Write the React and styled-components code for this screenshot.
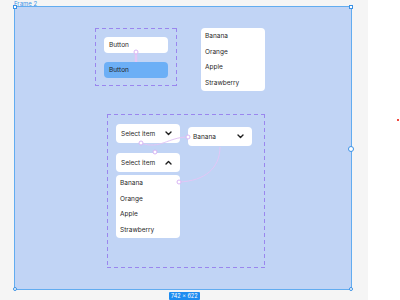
import React from 'react';
import styled, { createGlobalStyle } from 'styled-components';

const GlobalStyle = createGlobalStyle`
  html, body {
    margin: 0;
    padding: 0;
    width: 400px;
    height: 300px;
    overflow: hidden;
    font-family: Inter, "Noto Sans", sans-serif;
  }
`;

const Workspace = styled.div`
  display: flex;
  width: 400px;
  height: 300px;
`;

const Canvas = styled.div`
  width: 368px;
  height: 300px;
  background: #f5f5f5;
  padding: 0 0 0 14px;
  box-sizing: border-box;
  display: flex;
  flex-direction: column;
  align-items: flex-start;
`;

const Sidebar = styled.div`
  flex: 1;
  background: #ffffff;
  position: relative;

  &::after {
    content: '';
    position: absolute;
    left: 29px;
    top: 119px;
    width: 2px;
    height: 2px;
    background: #f0483e;
  }
`;

const FrameLabel = styled.div`
  height: 6px;
  font-size: 6px;
  line-height: 7px;
  color: #3b92e6;
  overflow: visible;
`;

const Frame = styled.div`
  position: relative;
  width: 338px;
  height: 284px;
  box-sizing: border-box;
  background: #c1d4f5;
  border: 1px solid #62acf0;
`;

const Handle = styled.span`
  position: absolute;
  width: 4px;
  height: 4px;
  box-sizing: border-box;
  background: #ffffff;
  border: 1px solid #3b92e6;
  border-radius: ${(p) => (p.$square ? '0' : '50%')};
  transform: translate(-50%, -50%);
`;

const MidHandle = styled(Handle)`
  width: 6px;
  height: 6px;
`;

const Badge = styled.div`
  align-self: flex-start;
  margin: 2px 0 0 155px;
  padding: 0 2px;
  height: 8px;
  line-height: 8px;
  font-size: 5.5px;
  color: #ffffff;
  background: #1d8cf0;
  border-radius: 1px;
`;

const dash = '#9a86ee';

const Group = styled.div`
  position: absolute;
  box-sizing: border-box;
  display: flex;
  flex-direction: column;
  gap: ${(p) => p.$gap || 9}px;
  padding: ${(p) => p.$pad};
  background:
    linear-gradient(90deg, ${dash} 60%, transparent 60%) top left / 7px 1px repeat-x,
    linear-gradient(90deg, ${dash} 60%, transparent 60%) bottom left / 7px 1px repeat-x,
    linear-gradient(180deg, ${dash} 60%, transparent 60%) top left / 1px 7px repeat-y,
    linear-gradient(180deg, ${dash} 60%, transparent 60%) top right / 1px 7px repeat-y;
`;

const Node = styled.div`
  position: absolute;
`;

const Button = styled.div`
  width: 64px;
  height: 16px;
  box-sizing: border-box;
  padding-left: 5px;
  display: flex;
  align-items: center;
  border-radius: 4px;
  font-size: 6.5px;
  color: #1f1f1f;
  background: ${(p) => (p.$primary ? '#6caff6' : '#ffffff')};
`;

const List = styled.div`
  width: 64px;
  height: 63px;
  box-sizing: border-box;
  background: #ffffff;
  border-radius: 4px;
  padding: 1px 0 0 4px;
  display: flex;
  flex-direction: column;
`;

const Item = styled.div`
  height: 15.7px;
  line-height: 15.7px;
  font-size: 6.5px;
  color: #1f1f1f;
`;

const Select = styled.div`
  width: 64px;
  height: 19px;
  box-sizing: border-box;
  padding: 0 8px 0 5px;
  display: flex;
  align-items: center;
  justify-content: space-between;
  background: #ffffff;
  border-radius: 4px;
  font-size: 6.5px;
  color: #1f1f1f;
`;

const Chevron = ({ up }) => (
  <svg width="7" height="5" viewBox="0 0 7 5">
    <path
      d={up ? 'M1 4 L3.5 1.5 L6 4' : 'M1 1 L3.5 3.5 L6 1'}
      fill="none"
      stroke="#1f1f1f"
      strokeWidth="1.4"
      strokeLinecap="round"
      strokeLinejoin="round"
    />
  </svg>
);

const Wires = styled.svg`
  position: absolute;
  left: -1px;
  top: -1px;
  width: 338px;
  height: 284px;
  pointer-events: none;
`;

const fruits = ['Banana', 'Orange', 'Apple', 'Strawberry'];

// page coords -> frame coords
const fx = (x) => x - 14;
const fy = (y) => y - 6;

function Connectors() {
  const dots = [
    [136, 52],
    [141, 143],
    [188, 137],
    [155, 152],
    [179, 182],
  ];
  return (
    <Wires viewBox="0 0 338 284">
      <g fill="none" stroke="#e3c6f6" strokeWidth="1">
        <path d={`M${fx(136)} ${fy(52)} L${fx(136)} ${fy(62)}`} strokeWidth="2.5" />
        <path d={`M${fx(141)} ${fy(143)} C${fx(160)} ${fy(150)} ${fx(168)} ${fy(137)} ${fx(188)} ${fy(137)}`} />
        <path d={`M${fx(179)} ${fy(182)} C${fx(205)} ${fy(181)} ${fx(220)} ${fy(168)} ${fx(220)} ${fy(147)}`} />
      </g>
      {dots.map(([x, y]) => (
        <circle key={`${x}-${y}`} cx={fx(x)} cy={fy(y)} r="2" fill="#ffffff" stroke="#d8b4f4" strokeWidth="1" />
      ))}
    </Wires>
  );
}

export default function App() {
  return (
    <>
      <GlobalStyle />
      <Workspace>
        <Canvas>
          <FrameLabel>Frame 2</FrameLabel>
          <Frame>
            <Group style={{ left: 80, top: 21, width: 82, height: 58 }} $pad="9px 0 0 9px">
              <Button>Button</Button>
              <Button $primary>Button</Button>
            </Group>

            <Node style={{ left: 186, top: 21 }}>
              <List>
                {fruits.map((f) => (
                  <Item key={f}>{f}</Item>
                ))}
              </List>
            </Node>

            <Group style={{ left: 92, top: 107, width: 158, height: 154 }} $pad="10px 0 0 9px">
              <Select>
                Select item <Chevron />
              </Select>
            </Group>

            <Node style={{ left: 173, top: 120 }}>
              <Select>
                Banana <Chevron />
              </Select>
            </Node>

            <Node style={{ left: 101, top: 146, display: 'flex', flexDirection: 'column', gap: 3 }}>
              <Select>
                Select item <Chevron up />
              </Select>
              <List>
                {fruits.map((f) => (
                  <Item key={f}>{f}</Item>
                ))}
              </List>
            </Node>

            <Connectors />

            <Handle $square style={{ left: 0, top: 0 }} />
            <Handle $square style={{ left: 336, top: 0 }} />
            <Handle style={{ left: 0, top: 282 }} />
            <Handle style={{ left: 336, top: 282 }} />
            <MidHandle style={{ left: 336, top: 142 }} />
          </Frame>
          <Badge>742 × 622</Badge>
        </Canvas>
        <Sidebar />
      </Workspace>
    </>
  );
}
